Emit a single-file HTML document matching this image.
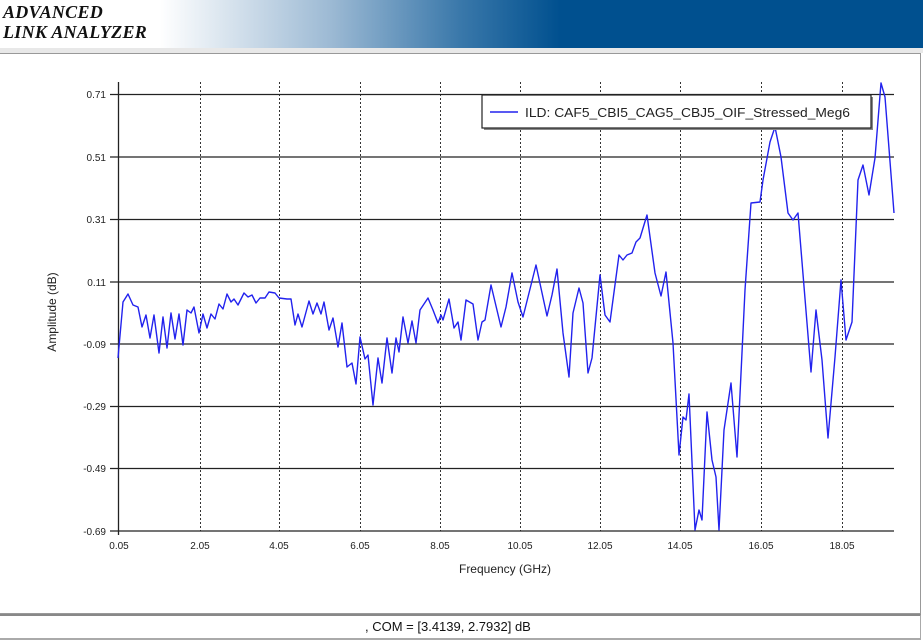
<!DOCTYPE html>
<html><head><meta charset="utf-8"><style>
html,body{margin:0;padding:0;width:923px;height:641px;overflow:hidden;background:#fff;font-family:"Liberation Sans",sans-serif}
#hdr{position:absolute;left:0;top:0;width:923px;height:48px;background:linear-gradient(90deg,#fff 0,#fff 160px,#9dbad4 330px,#3a78aa 460px,#00508f 560px,#00508f 923px)}
#hdr div{position:absolute;left:3px;font-family:"Liberation Serif",serif;font-style:italic;font-weight:bold;font-size:18px;color:#111;letter-spacing:0.3px}
#band{position:absolute;left:0;top:48px;width:923px;height:5px;background:#e8e8e8}
#panel{position:absolute;left:0;top:53px;width:920px;height:559px;border:1px solid #999;border-left:none}
#status{position:absolute;left:0;top:614px;width:920px;height:22px;border-top:2px solid #888;border-bottom:2px solid #aaa;border-right:1px solid #aaa}
#status span{position:absolute;left:365px;top:0;font-size:13px;line-height:22px;color:#111;white-space:nowrap}
svg{position:absolute;left:0;top:0}
</style></head><body>
<div id="hdr"><div style="top:2px">ADVANCED</div><div style="top:22px">LINK ANALYZER</div></div>
<div id="band"></div>
<div id="panel"></div>
<div id="status"><span>, COM = [3.4139, 2.7932] dB</span></div>
<svg width="923" height="641" font-family="Liberation Sans, sans-serif" font-size="10">
<g stroke="#333" stroke-dasharray="2,2" stroke-width="1">
<line x1="200.5" y1="82" x2="200.5" y2="531"/><line x1="279.5" y1="82" x2="279.5" y2="531"/><line x1="360.5" y1="82" x2="360.5" y2="531"/><line x1="440.5" y1="82" x2="440.5" y2="531"/><line x1="520.5" y1="82" x2="520.5" y2="531"/><line x1="600.5" y1="82" x2="600.5" y2="531"/><line x1="680.5" y1="82" x2="680.5" y2="531"/><line x1="761.5" y1="82" x2="761.5" y2="531"/><line x1="842.5" y1="82" x2="842.5" y2="531"/>
</g>
<g stroke="#222" stroke-width="1.3">
<line x1="110" y1="94.5" x2="894" y2="94.5"/><line x1="110" y1="157" x2="894" y2="157"/><line x1="110" y1="219.5" x2="894" y2="219.5"/><line x1="110" y1="282" x2="894" y2="282"/><line x1="110" y1="344" x2="894" y2="344"/><line x1="110" y1="406.5" x2="894" y2="406.5"/><line x1="110" y1="468.5" x2="894" y2="468.5"/><line x1="110" y1="531" x2="894" y2="531"/>
<line x1="118.5" y1="82" x2="118.5" y2="535"/>
</g>
<g fill="#222" text-anchor="end">
<text x="106" y="98">0.71</text><text x="106" y="161">0.51</text><text x="106" y="223">0.31</text><text x="106" y="286">0.11</text><text x="106" y="348">-0.09</text><text x="106" y="410">-0.29</text><text x="106" y="472">-0.49</text><text x="106" y="535">-0.69</text>
</g>
<g fill="#222" text-anchor="middle">
<text x="119" y="549">0.05</text><text x="200" y="549">2.05</text><text x="279" y="549">4.05</text><text x="360" y="549">6.05</text><text x="440" y="549">8.05</text><text x="520" y="549">10.05</text><text x="600" y="549">12.05</text><text x="680" y="549">14.05</text><text x="761" y="549">16.05</text><text x="842" y="549">18.05</text>
<text x="505" y="573" font-size="12">Frequency (GHz)</text>
<text x="0" y="0" font-size="12" transform="translate(56,312) rotate(-90)">Amplitude (dB)</text>
</g>
<polyline fill="none" stroke="#2222ee" stroke-width="1.4" stroke-linejoin="round" points="118,358 123,302 128,294 133,305 138,307 142,327 146,315 150,338 154,315 159,353 163,317 167,348 171,313 175,339 179,314 183,345 187,310 191,313 194,307 199,333 203,314 207,328 211,314 215,319 219,304 223,309 227,294 231,302 234,299 238,305 244,293 248,297 252,295 256,303 260,298 265,298 269,292 275,293 279,298 287,299 291,299 295,325 298,314 302,327 309,301 313,314 317,303 321,314 324,302 329,330 333,318 338,347 342,323 347,367 352,363 356,384 360,337 365,359 368,355 373,405 378,358 382,383 387,338 392,373 396,338 399,352 403,317 408,343 412,321 416,343 420,310 428,298 433,310 438,323 441,315 443,320 449,299 454,328 458,322 461,340 466,300 473,304 478,340 482,322 485,320 491,285 501,327 506,307 512,273 518,302 523,317 536,265 547,316 552,295 557,269 563,333 569,377 573,313 579,288 583,303 588,373 592,358 600,275 605,315 610,322 619,255 623,260 627,255 632,253 636,242 640,238 647,215 655,273 661,296 666,272 673,343 679,455 683,417 686,420 689,394 695,530 699,510 702,520 707,412 712,460 716,477 719,530 724,430 731,383 737,457 745,290 751,203 760,202 763,180 770,142 775,127 781,157 788,213 793,220 798,213 807,323 811,372 816,310 822,360 828,438 835,357 841,280 846,340 852,322 858,180 863,165 869,195 875,158 881,83 885,97 894,213"/>
<rect x="484" y="97" width="389" height="33" fill="#888"/>
<rect x="482" y="95" width="389" height="33" fill="#fff" stroke="#222" stroke-width="1.2"/>
<line x1="490" y1="112" x2="518" y2="112" stroke="#2222ee" stroke-width="1.5"/>
<text x="525" y="117" font-size="13" fill="#222" textLength="325" lengthAdjust="spacingAndGlyphs">ILD: CAF5_CBI5_CAG5_CBJ5_OIF_Stressed_Meg6</text>
</svg>
</body></html>
